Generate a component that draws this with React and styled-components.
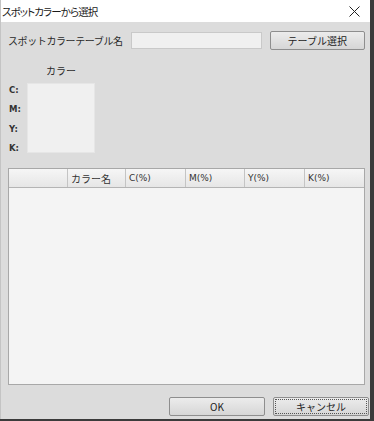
import styled, { createGlobalStyle } from "styled-components";

const GlobalStyle = createGlobalStyle`
  html, body {
    margin: 0;
    padding: 0;
    background: #3b3b3b;
  }
  * {
    box-sizing: border-box;
  }
`;

const FONT = `"Noto Sans CJK JP", "Noto Sans", "Liberation Sans", sans-serif`;

const Dialog = styled.div`
  width: 370px;
  height: 419px;
  background: #dcdcdc;
  display: flex;
  flex-direction: column;
  font-family: ${FONT};
  color: #1a1a1a;
  border-left: 1px solid #c4c4c4;
`;

const TitleBar = styled.div`
  height: 22px;
  background: #ffffff;
  display: flex;
  align-items: center;
  justify-content: space-between;
  padding: 0 10px 0 1px;
  font-size: 10.5px;
  letter-spacing: -0.9px;
  font-feature-settings: "palt";
`;

const CloseIcon = styled.svg`
  width: 11px;
  height: 11px;
`;

const Body = styled.div`
  flex: 1;
  display: flex;
  flex-direction: column;
  padding: 9px 5px 0 7px;
`;

const TableRow = styled.div`
  display: flex;
  align-items: center;
  height: 19px;
`;

const Label = styled.span`
  font-size: 10px;
  color: #2a2a2a;
  width: 124px;
  letter-spacing: -0.4px;
`;

const TextInput = styled.div`
  width: 131px;
  height: 17px;
  background: #f0f0f0;
  border: 1px solid #c9c9c9;
`;

const Button = styled.div`
  width: ${(p) => p.$w || 96}px;
  height: 19px;
  display: flex;
  align-items: center;
  justify-content: center;
  font-size: 10px;
  color: #222;
  border: 1px solid #8e8e8e;
  border-radius: 2px;
  background: linear-gradient(#ececec, #d6d6d6);
  outline: ${(p) => (p.$focus ? "1px dotted #555" : "none")};
  outline-offset: -3px;
`;

const ColorSection = styled.div`
  display: grid;
  grid-template-columns: 18px 68px;
  grid-template-rows: 12px 70px;
  row-gap: 6px;
  margin-top: 15px;
  margin-left: 1px;
`;

const ColorTitle = styled.div`
  grid-column: 2;
  text-align: center;
  font-size: 10px;
  line-height: 12px;
  color: #2a2a2a;
`;

const ChannelList = styled.div`
  grid-column: 1;
  display: flex;
  flex-direction: column;
  gap: 5.3px;
`;

const Channel = styled.span`
  font-size: 8.5px;
  font-weight: bold;
  font-family: "DejaVu Sans", sans-serif;
  color: #333;
  height: 14px;
  line-height: 14px;
`;

const Swatch = styled.div`
  grid-column: 2;
  background: #f0f0f0;
  border: 1px solid #e6e6e6;
`;

const Table = styled.div`
  margin-top: 15px;
  width: 357px;
  height: 217px;
  background: #f4f4f4;
  border: 1px solid #a8a8a8;
  display: flex;
  flex-direction: column;
`;

const HeaderRow = styled.div`
  display: grid;
  grid-template-columns: 59px 58px 60px 59px 60px 1fr;
  height: 19px;
  background: linear-gradient(#f6f6f6, #e6e6e6);
  border-bottom: 1px solid #b4b4b4;
`;

const HeaderCell = styled.div`
  font-size: ${(p) => (p.$latin ? "9px" : "10px")};
  font-family: ${(p) => (p.$latin ? `"DejaVu Sans", sans-serif` : FONT)};
  color: #333;
  display: flex;
  align-items: center;
  padding-left: 3px;
  border-right: ${(p) => (p.$last ? "none" : "1px solid #c4c4c4")};
`;

const Footer = styled.div`
  display: flex;
  justify-content: flex-end;
  gap: 8px;
  margin-top: 12px;
  margin-right: -4px;
`;

export default function App() {
  return (
    <>
      <GlobalStyle />
      <Dialog>
        <TitleBar>
          <span>スポットカラーから選択</span>
          <CloseIcon viewBox="0 0 11 11">
            <path d="M0.5 0.5 L10.5 10.5 M10.5 0.5 L0.5 10.5" stroke="#222" strokeWidth="1" />
          </CloseIcon>
        </TitleBar>
        <Body>
          <TableRow>
            <Label>スポットカラーテーブル名</Label>
            <TextInput />
            <div style={{ width: 8 }} />
            <Button $w={96}>テーブル選択</Button>
          </TableRow>
          <ColorSection>
            <ColorTitle>カラー</ColorTitle>
            <ChannelList>
              <Channel>C:</Channel>
              <Channel>M:</Channel>
              <Channel>Y:</Channel>
              <Channel>K:</Channel>
            </ChannelList>
            <Swatch />
          </ColorSection>
          <Table>
            <HeaderRow>
              <HeaderCell />
              <HeaderCell>カラー名</HeaderCell>
              <HeaderCell $latin>C(%)</HeaderCell>
              <HeaderCell $latin>M(%)</HeaderCell>
              <HeaderCell $latin>Y(%)</HeaderCell>
              <HeaderCell $latin $last>K(%)</HeaderCell>
            </HeaderRow>
          </Table>
          <Footer>
            <Button $w={96}>OK</Button>
            <Button $w={96} $focus>キャンセル</Button>
          </Footer>
        </Body>
      </Dialog>
    </>
  );
}
